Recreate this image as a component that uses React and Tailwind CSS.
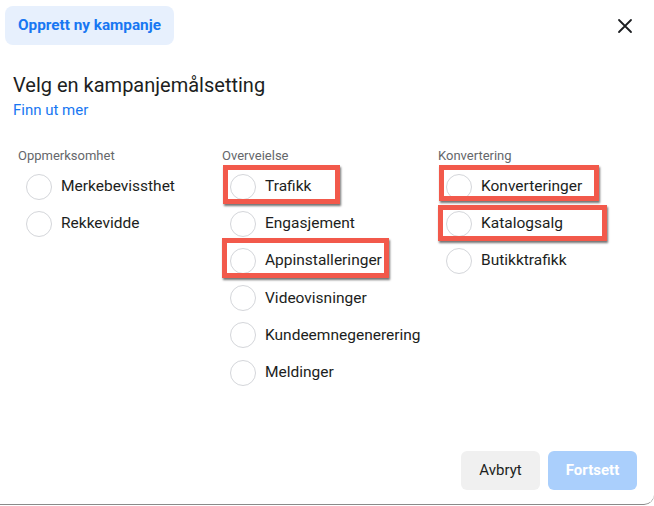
import React from 'react';

const columns = [
  { title: 'Oppmerksomhet', width: 'w-[204px]', items: ['Merkebevissthet', 'Rekkevidde'] },
  {
    title: 'Overveielse',
    width: 'w-[216px]',
    items: ['Trafikk', 'Engasjement', 'Appinstalleringer', 'Videovisninger', 'Kundeemnegenerering', 'Meldinger'],
  },
  { title: 'Konvertering', width: 'flex-1', items: ['Konverteringer', 'Katalogsalg', 'Butikktrafikk'] },
];

const Radio = ({ label }) => (
  <div className="flex items-center h-[37.2px] pl-2">
    <span className="w-[26px] h-[26px] rounded-full border border-[#d4d6da] bg-white shrink-0" />
    <span className="ml-[9px] text-[15.5px] text-[#1c1e21]">{label}</span>
  </div>
);

// red annotation boxes drawn over the options
const Mark = ({ className }) => (
  <div
    className={`absolute border-[5px] border-[#f2594b] shadow-[1px_2px_2px_rgba(0,0,0,0.55)] ${className}`}
  />
);

export default function App() {
  return (
    <div className="w-[654px] h-[506px] bg-white" style={{ fontFamily: 'Roboto, "Liberation Sans", sans-serif' }}>
      <div className="relative w-[654px] h-[505px] bg-white rounded-br-[10px] border-b border-[#8a8a8a]">
        <div className="flex items-start justify-between pt-[6px] pl-[5px] pr-[20px]">
          <div className="h-[39px] px-[13px] flex items-center rounded-lg bg-[#e7f0fd] text-[15.3px] font-bold text-[#1877f2]">
            Opprett ny kampanje
          </div>
          <button className="mt-[11px] text-[#1c1e21]">
            <svg width="18" height="18" viewBox="0 0 18 18" fill="none" stroke="currentColor" strokeWidth="1.8" strokeLinecap="round">
              <path d="M3 3l12 12M15 3L3 15" />
            </svg>
          </button>
        </div>

        <div className="px-[13px] pt-[26px]">
          <h1 className="text-[20px] leading-[28px] text-[#1c1e21]">Velg en kampanjemålsetting</h1>
          <a className="block text-[15px] leading-[22px] text-[#1877f2]">Finn ut mer</a>
        </div>

        <div className="flex pl-[18px] pt-[27px]">
          {columns.map((col) => (
            <div key={col.title} className={col.width}>
              <div className="text-[13px] leading-[16px] text-[#65676b] mb-[4px]">{col.title}</div>
              {col.items.map((it) => (
                <Radio key={it} label={it} />
              ))}
            </div>
          ))}
        </div>

        <Mark className="left-[223px] top-[165px] w-[117px] h-[39px]" />
        <Mark className="left-[222px] top-[238px] w-[167px] h-[40px]" />
        <Mark className="left-[439px] top-[165px] w-[160px] h-[36px]" />
        <Mark className="left-[438px] top-[205px] w-[169px] h-[36px]" />

        <div className="absolute right-[17px] bottom-[14px] flex gap-2">
          <button className="h-[39px] w-[79px] rounded-md bg-[#f0f0f0] text-[15px] text-[#1c1e21]">Avbryt</button>
          <button className="h-[39px] w-[89px] rounded-md bg-[#aacffc] text-[15px] font-bold text-white">Fortsett</button>
        </div>
      </div>
    </div>
  );
}
